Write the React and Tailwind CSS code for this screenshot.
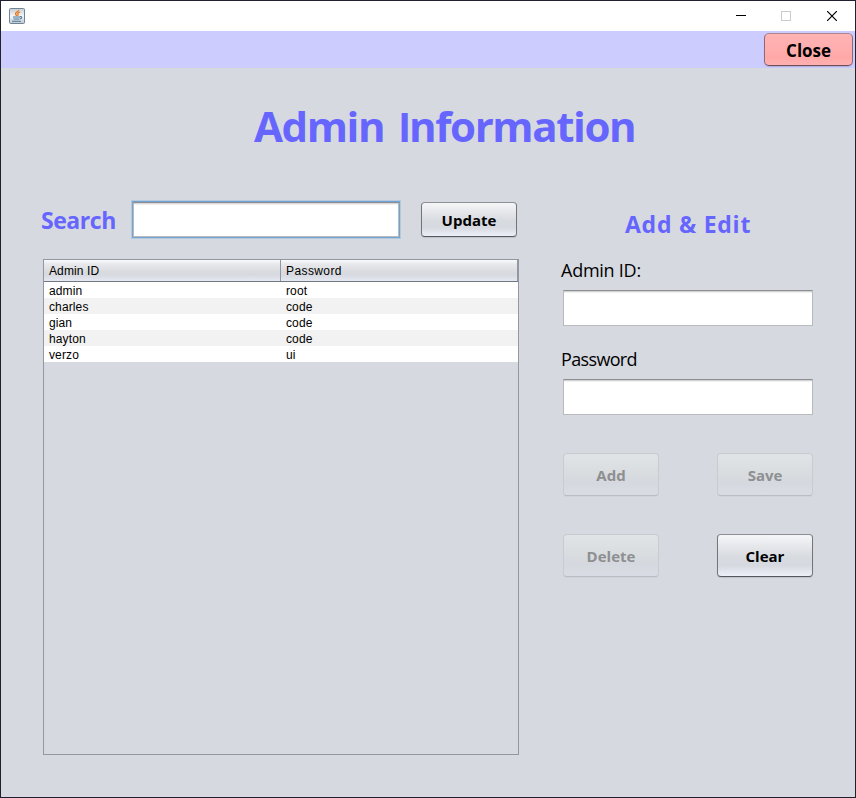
const rows = [
  ["admin", "root"],
  ["charles", "code"],
  ["gian", "code"],
  ["hayton", "code"],
  ["verzo", "ui"],
];

const ENABLED =
  "border-[#8d8f94] border-x-[#74767b] border-b-[#55575c] bg-[linear-gradient(180deg,#f5f6f8_0%,#e4e6ea_30%,#d7dadf_55%,#d6d9e0_75%,#edf0f8_100%)] text-black shadow-[0_1px_1px_#bfc2c9]";
const DISABLED =
  "border-[#c9cccf] border-b-[#b9bcc1] bg-[linear-gradient(180deg,#e0e4e7_0%,#d9dde0_45%,#d5d9df_70%,#d9dce4_100%)] text-[#8e8f91] shadow-[0_1px_0_#cfd2d8]";

function Button({ children, className, disabled }) {
  return (
    <button
      disabled={disabled}
      className={`flex w-24 items-center justify-center rounded-[4px] border pt-[2px] text-[15px] font-bold ${disabled ? DISABLED : ENABLED} ${className}`}
    >
      {children}
    </button>
  );
}

function Field({ label, id, className, labelClass }) {
  return (
    <div className={className}>
      <label htmlFor={id} className={`block h-[26px] w-fit text-[18px] leading-[26px] text-black ${labelClass}`}>
        {label}
      </label>
      <input
        id={id}
        className="mt-[7px] ml-[2px] block h-9 w-[250px] border border-[#b8babd] border-t-[#8d8e91] bg-white px-2 text-base shadow-[inset_0_1px_0_#d2d3d4,inset_0_2px_0_#f0f0f0] outline-none"
      />
    </div>
  );
}

function JavaIcon() {
  return (
    <svg width="16" height="16" viewBox="0 0 16 16" fill="none" className="-mt-px">
      <defs>
        <linearGradient id="tile" x1="0" y1="0" x2="0" y2="1">
          <stop offset="0" stopColor="#c3cdd5" />
          <stop offset="0.5" stopColor="#f4f6f8" />
          <stop offset="1" stopColor="#b9c8d3" />
        </linearGradient>
      </defs>
      <rect x="0.5" y="0.5" width="15" height="15" rx="1" fill="url(#tile)" stroke="#738391" />
      <path d="M9.600 2C10 3.600 6.300 4 6.500 5.700c.1.9 1 1.200 1.100 2.300M11 4.100C9.300 4.600 8.400 5.300 8.900 6.300c.3.6.3 1-.2 1.600" stroke="#e87c27" strokeWidth="1.4" />
      <path d="M4 9h7M4.500 11h6M3 13.300h9M11 8.700c2.300-.5 2.400 1.500.1 2.200" stroke="#4d7896" strokeWidth="1.100" />
    </svg>
  );
}

export default function App() {
  return (
    <div className="flex h-[798px] w-[856px] flex-col overflow-hidden border border-[#231f2e] bg-[#d6d9e0] font-['Open_Sans','Noto_Sans',sans-serif]">
      <header className="flex h-[30px] shrink-0 items-center bg-white pl-2">
        <JavaIcon />
        <div className="ml-auto flex h-full">
          <span className="flex w-[46px] items-center justify-center pl-px">
            <svg width="10" height="10" shapeRendering="crispEdges"><path d="M0 4.500h10" stroke="#000" /></svg>
          </span>
          <span className="flex w-[46px] items-center justify-center">
            <svg width="10" height="10" shapeRendering="crispEdges"><rect x=".5" y=".5" width="9" height="9" fill="none" stroke="#ccc" /></svg>
          </span>
          <span className="flex w-[46px] items-center justify-center">
            <svg width="10" height="10"><path d="M0 0l10 10M10 0L0 10" stroke="#000" strokeWidth="1.200" /></svg>
          </span>
        </div>
      </header>

      <div className="flex h-[37px] shrink-0 justify-end bg-[#ccccff] pt-[2px] pr-[2px]">
        <button className="flex h-[33px] w-[89px] items-center justify-center rounded-[5px] border border-[#ad8790] border-x-[#8d6975] border-b-[#704e5b] bg-[linear-gradient(180deg,#ffb3b3_0%,#ffadad_50%,#ffa8a8_75%,#ffb0b0_100%)] pt-[2px] text-[17px] font-bold tracking-[-0.05px] text-black shadow-[0_1px_1px_#adadd8]">
          Close
        </button>
      </div>

      <h1 className="mt-[28px] ml-[253px] h-[60px] shrink-0 text-[42px] leading-[60px] font-bold tracking-[-1.4px] whitespace-nowrap text-[#6666ff]">
        Admin <span className="ml-[5px] font-['Liberation_Sans',Arial,sans-serif]">I</span>nformation
      </h1>

      <main className="flex">
        <section className="mt-[44px] ml-10 w-[478px]">
          <div className="flex">
            <h2 className="h-10 w-[91px] text-[23px] leading-10 font-bold tracking-[-0.45px] text-[#6666ff]">Search</h2>
            <input
              aria-label="Search"
              className="mt-px h-[37px] w-[268px] border border-[#73a4d1] bg-white px-2 shadow-[0_0_0_1px_#b3c9e0,inset_0_1px_0_#8d8e91,inset_1px_0_0_#b8babd,inset_-1px_0_0_#b8babd,inset_0_-1px_0_#b8babd,inset_0_2px_0_#d8d8d8,inset_0_3px_0_#f2f2f2] outline-none"
            />
            <Button className="mt-[2px] ml-[21px] h-[35px]">Update</Button>
          </div>

          <div className="mt-[19px] ml-[2px] h-[496px] w-[476px] border border-[#9297a1] font-['Liberation_Sans',Arial,sans-serif] text-[12px] text-black">
            <div className="flex h-[22px] border-b border-[#73777f] bg-[linear-gradient(180deg,#fafbfc_0%,#e6e8eb_20%,#dadcdf_55%,#d6d9df_70%,#e5e9f3_100%)] leading-[23px]">
              <span className="w-[237px] border-r border-[#9297a1] pl-[5px] tracking-[0.1px]">Admin ID</span>
              <span className="flex-1 border-r border-[#9297a1] pl-[5px] tracking-[0.4px]">Password</span>
            </div>
            {rows.map(([id, password]) => (
              <div key={id} className="flex h-4 leading-[19px] tracking-[0.12px] even:bg-white odd:bg-[#f2f2f2]">
                <span className="w-[237px] pl-[5px]">{id}</span>
                <span className="pl-[5px]">{password}</span>
              </div>
            ))}
          </div>
        </section>

        <section className="mt-[51px] ml-[42px] w-[254px]">
          <h2 className="ml-[64px] h-[34px] text-[23px] leading-[34px] font-bold tracking-[0.75px] whitespace-nowrap text-[#6666ff]">
            Add &amp; Edit
          </h2>
          <Field label="Admin ID:" id="admin-id" className="mt-[16px]" labelClass="tracking-[-0.25px]" />
          <Field label="Password" id="password" className="mt-[20px]" labelClass="tracking-[-0.65px]" />
          <div className="mt-[38px] ml-[2px] grid w-[250px] grid-cols-[96px_96px] justify-between gap-y-[38px]">
            <Button disabled className="h-[43px]">Add</Button>
            <Button disabled className="h-[43px]">Save</Button>
            <Button disabled className="h-[43px]">Delete</Button>
            <Button className="h-[43px]">Clear</Button>
          </div>
        </section>
      </main>
    </div>
  );
}
